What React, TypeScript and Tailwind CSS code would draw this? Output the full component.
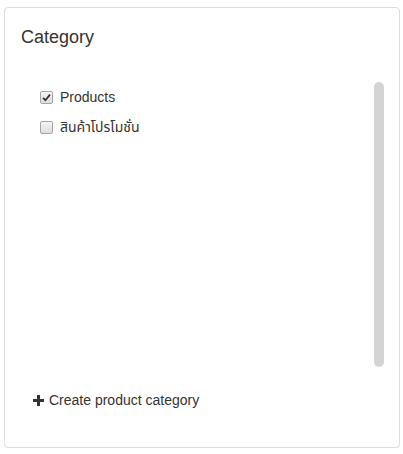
import { useState } from 'react'

const CATEGORIES = [
  { id: 'products', label: 'Products', checked: true },
  { id: 'promo', label: 'สินค้าโปรโมชั่น', checked: false },
]

export default function App() {
  const [items, setItems] = useState(CATEGORIES)

  const toggle = (id: string) => {
    setItems((prev) => prev.map((i) => (i.id === id ? { ...i, checked: !i.checked } : i)))
  }

  return (
    <div
      className="pl-[4px] pt-[7px] bg-white"
      style={{ fontFamily: '"Liberation Sans", Arial, "Noto Sans", sans-serif' }}
    >
      <div className="w-[396px] h-[441px] border border-[#dddddd] rounded-[4px] bg-white shadow-[0_1px_1px_rgba(0,0,0,0.05)] flex flex-col">
        {/* Header */}
        <div className="pl-[16px] pt-[19px] h-[74px]">
          <h3 className="text-[18px] leading-[20px] text-[#333333]">Category</h3>
        </div>

        {/* List + scrollbar */}
        <div className="flex h-[285px]">
          <div className="flex-1 pl-[35px]">
            {items.map((item) => (
              <label
                key={item.id}
                className="flex items-center h-[30px] cursor-pointer"
                onClick={() => toggle(item.id)}
              >
                <Checkbox checked={item.checked} />
                <span
                  className="ml-[7px] text-[14px] leading-[20px] text-[#333333]"
                  style={{ fontFamily: '"Liberation Sans", Arial, "Noto Sans", "Noto Sans Thai", sans-serif' }}
                >
                  {item.label}
                </span>
              </label>
            ))}
          </div>
          <div className="w-[10px] h-[285px] rounded-full bg-[#d4d4d4] mr-[15px]" />
        </div>

        {/* Footer action */}
        <div className="pl-[28px] pt-[23px]">
          <button className="flex items-center text-[14px] leading-[20px] text-[#333333]">
            <PlusIcon />
            <span className="ml-[5px]">Create product category</span>
          </button>
        </div>
      </div>
    </div>
  )
}

function Checkbox({ checked }: { checked: boolean }) {
  return (
    <span className="w-[13px] h-[13px] rounded-[2px] border border-[#a6a6a6] bg-gradient-to-b from-[#f4f4f4] to-[#dedede] flex items-center justify-center">
      {checked && (
        <svg width="9" height="9" viewBox="0 0 9 9">
          <path d="M1 4.8 L3.4 7.2 L8 1.6" fill="none" stroke="#333333" strokeWidth="1.8" />
        </svg>
      )}
    </span>
  )
}

function PlusIcon() {
  return (
    <svg width="11" height="11" viewBox="0 0 11 11" className="fill-[#333333]">
      <rect x="4" y="0" width="3" height="11" />
      <rect x="0" y="4" width="11" height="3" />
    </svg>
  )
}
